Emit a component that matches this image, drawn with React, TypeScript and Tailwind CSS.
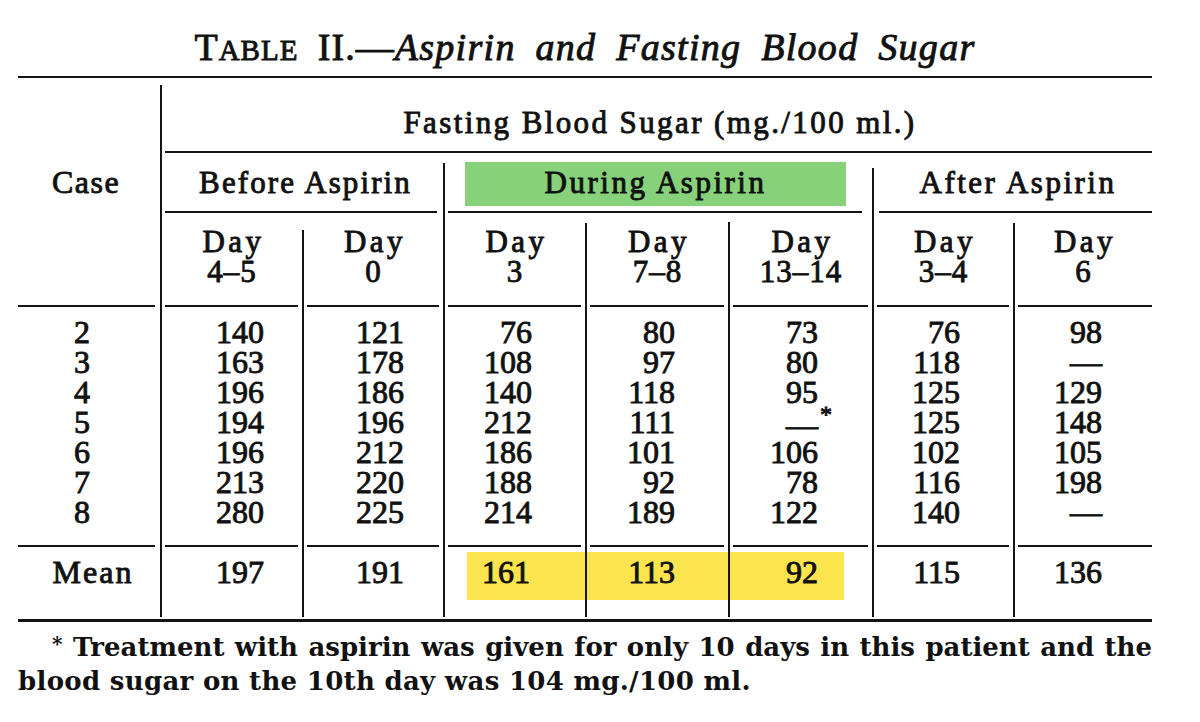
import type { ReactNode } from "react";

// one grid cell: optional vertical rule on the left, optional horizontal rule at the bottom
function Cell({
  line,
  rule,
  className = "",
  children,
}: {
  line?: string;
  rule?: string;
  className?: string;
  children?: ReactNode;
}) {
  return (
    <div className={`flex ${className}`}>
      {line !== undefined && <div className={`w-[2px] shrink-0 bg-[#141414] ${line}`} />}
      <div className="flex min-w-0 flex-1 flex-col">
        <div className="flex-1">{children}</div>
        {rule !== undefined && <div className={`h-[2px] bg-[#141414] ${rule}`} />}
      </div>
    </div>
  );
}

const cases = ["2", "3", "4", "5", "6", "7", "8"];

interface Column {
  sub: string;
  line: string;
  pad: string;
  values: string[];
}

const columns: Column[] = [
  { sub: "4–5", line: "", pad: "pr-[38px]", values: ["140", "163", "196", "194", "196", "213", "280"] },
  { sub: "0", line: "mt-[17px]", pad: "pr-[39px]", values: ["121", "178", "186", "196", "212", "220", "225"] },
  { sub: "3", line: "", pad: "pr-[53px]", values: ["76", "108", "140", "212", "186", "188", "214"] },
  { sub: "7–8", line: "mt-[10px]", pad: "pr-[53px]", values: ["80", "97", "118", "111", "101", "92", "189"] },
  { sub: "13–14", line: "mt-[9px]", pad: "pr-[54px]", values: ["73", "80", "95", "*", "106", "78", "122"] },
  { sub: "3–4", line: "", pad: "pr-[53px]", values: ["76", "118", "125", "125", "102", "116", "140"] },
  { sub: "6", line: "mt-[10px]", pad: "pr-[50px]", values: ["98", "—", "129", "148", "105", "198", "—"] },
];

function Value({ v }: { v: string }) {
  if (v === "*") {
    return (
      <span className="relative inline-block translate-y-[3px]">
        —
        <span className="absolute left-full top-[-11px] ml-[2px] text-[24px]">*</span>
      </span>
    );
  }
  return <>{v}</>;
}

export default function App() {
  return (
    <div className="min-h-screen bg-white font-['Liberation_Serif',serif] text-[#111] [-webkit-text-stroke:0.9px_#111]">
      <div className="ml-[18px] w-[1134px]">
        {/* title */}
        <div className="h-[76px] pt-[27px] text-center text-[38px] leading-[40px] [word-spacing:9px]">
          <span className="tracking-[1px]">
            T<span className="text-[29px]">ABLE</span> II.—
          </span>
          <span className="italic tracking-[1.3px]">Aspirin and Fasting Blood Sugar</span>
        </div>
        <div className="h-[2px] bg-[#141414]" />

        <div className="grid grid-cols-[142px_142px_141px_142px_143px_144px_141px_139px] grid-rows-[75px_60px_94px_240px_70px] text-[32px] leading-[30px]">
          {/* case header */}
          <Cell className="row-span-3" rule="mr-[5px]">
            <div className="pt-[89px] pr-[6px] text-center leading-[31px] tracking-[1.5px]">Case</div>
          </Cell>

          <Cell className="col-span-7" line="mt-[7px]" rule="ml-[3px]">
            <div className="pt-[29px] pl-[6px] text-center text-[31px] leading-[31px] tracking-[2.4px]">
              Fasting Blood Sugar (mg./100 ml.)
            </div>
          </Cell>

          {/* group headers */}
          <Cell className="col-span-2" line="" rule="ml-[3px] mr-[6px]">
            <div className="pt-[14px] pl-[6px] text-center text-[31px] leading-[31px] tracking-[2.1px]">Before Aspirin</div>
          </Cell>
          <Cell className="col-span-3" line="mt-[10px]" rule="ml-[3px] mr-[10px]">
            <div className="mt-[9px] ml-[20px] mr-[26px] h-[44px] bg-[#86d17a] pt-[5px] text-center text-[31px] leading-[31px] tracking-[2.5px]">
              During Aspirin
            </div>
          </Cell>
          <Cell className="col-span-2" line="mt-[15px]" rule="ml-[5px]">
            <div className="pt-[14px] pl-[10px] text-center text-[31px] leading-[31px] tracking-[2.5px]">After Aspirin</div>
          </Cell>

          {/* day headers */}
          {columns.map((c, i) => (
            <Cell key={`h${i}`} line={c.line} rule={i === 6 ? "ml-[3px]" : "ml-[3px] mr-[4px]"}>
              <div className="pt-[14px] text-center text-[31px]">
                <div className="pl-[3px] tracking-[3.5px]">Day</div>
                <div className="tracking-[1px]">{c.sub}</div>
              </div>
            </Cell>
          ))}

          {/* data rows */}
          <Cell rule="mr-[5px]">
            <div className="pt-[10px] pr-[14px] text-center">
              {cases.map((n) => (
                <div key={n}>{n}</div>
              ))}
            </div>
          </Cell>
          {columns.map((c, i) => (
            <Cell key={`d${i}`} line="" rule={i === 6 ? "ml-[3px]" : "ml-[3px] mr-[4px]"}>
              <div className={`pt-[10px] text-right ${c.pad}`}>
                {c.values.map((v, j) => (
                  <div key={j}>
                    <Value v={v} />
                  </div>
                ))}
              </div>
            </Cell>
          ))}

          {/* means */}
          <Cell>
            <div className="pt-[10px] pl-[8px] text-center tracking-[2px]">Mean</div>
          </Cell>
          <Cell line="">
            <div className="pt-[10px] pr-[38px] text-right">197</div>
          </Cell>
          <Cell line="">
            <div className="pt-[10px] pr-[39px] text-right">191</div>
          </Cell>
          <Cell line="">
            <div className="mt-[5px] ml-[22px] h-[48px] bg-[#fce44e] pt-[5px] pr-[55px] text-right">161</div>
          </Cell>
          <Cell line="">
            <div className="mt-[5px] h-[48px] bg-[#fce44e] pt-[5px] pr-[53px] text-right">113</div>
          </Cell>
          <Cell line="">
            <div className="mt-[5px] mr-[28px] h-[48px] bg-[#fce44e] pt-[5px] pr-[26px] text-right">92</div>
          </Cell>
          <Cell line="">
            <div className="pt-[10px] pr-[53px] text-right">115</div>
          </Cell>
          <Cell line="">
            <div className="pt-[10px] pr-[50px] text-right">136</div>
          </Cell>
        </div>

        <div className="h-[2px]" />
        <div className="h-[3px] bg-[#141414]" />

        {/* footnote */}
        <div className="pt-[9px] font-['DejaVu_Serif',serif] text-[26px] font-bold leading-[32px] [-webkit-text-stroke:0px]">
          <div className="pl-[34px] text-justify [text-align-last:justify]">
            <span className="relative top-[-5px] text-[20px]">*</span> Treatment with aspirin was given for only 10 days in this patient and the
          </div>
          <div className="tracking-[0.3px]">blood sugar on the 10th day was 104 mg./100 ml.</div>
        </div>
      </div>
    </div>
  );
}
